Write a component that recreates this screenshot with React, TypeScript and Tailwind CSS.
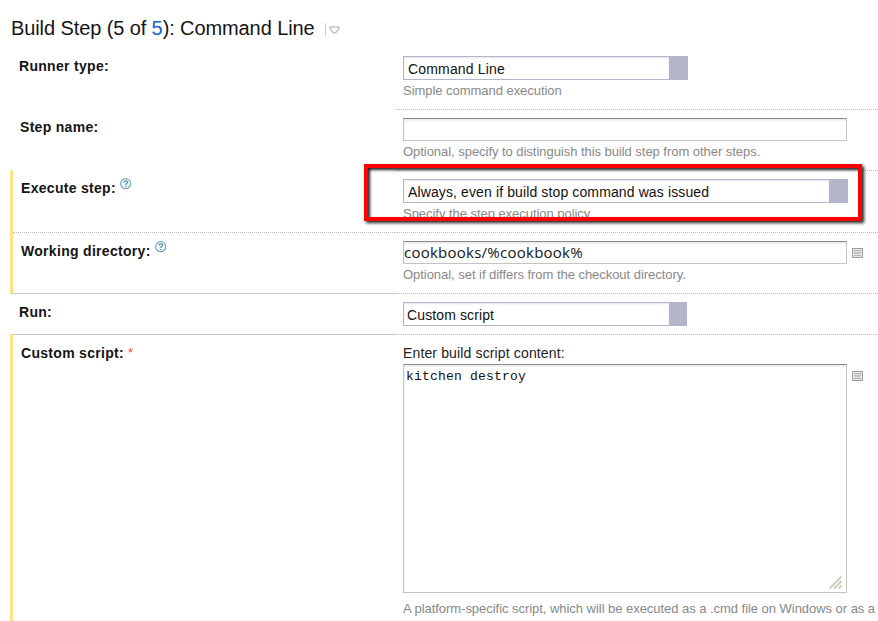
import type { ReactNode } from 'react';

function HelpIcon() {
  return (
    <svg className="ml-[4px] mt-[-2px] h-[12px] w-[12px] shrink-0" viewBox="0 0 12 12" fill="none">
      <circle cx="5.7" cy="5.7" r="5" fill="#f1f8fb" stroke="#7ba6bb" strokeWidth="1.2" />
      <path d="M3.9 4.5C3.9 2.3 7.6 2.3 7.6 4.3C7.6 5.5 5.8 5.5 5.8 7M5.8 7.9V9.1" stroke="#5f93ae" strokeWidth="1.3" />
    </svg>
  );
}

function ListIcon() {
  return (
    <svg className="ml-[5px] mt-[7px] h-[10px] w-[11px] shrink-0" viewBox="0 0 11 10" fill="none" shapeRendering="crispEdges">
      <rect x="0.5" y="0.5" width="10" height="9" fill="#e4e4e7" stroke="#a0a0a0" />
      <path d="M2 2.5H9M2 7.5H9" stroke="#b4b4b8" />
      <path d="M3 4.5H8M3 5.5H8" stroke="#c2c2c6" />
      <path d="M2 4.5H3M8 4.5H9" stroke="#b4b4b8" />
    </svg>
  );
}

function Row({ label, height, cellTop, labelTop = 'pt-[9px]', marked, line, children }: {
  label: ReactNode;
  height: string;
  cellTop: string;
  labelTop?: string;
  marked?: boolean;
  line: string;
  children: ReactNode;
}) {
  return (
    <div className={`flex ${height}`}>
      <div className={`w-[3px] shrink-0 ${marked ? 'mt-[-1px] bg-[#ffe180]' : ''}`} />
      <div className={`flex w-[382px] shrink-0 items-start border-b text-[14px] leading-[16px] font-bold tracking-[0.3px] text-[#151515] ${labelTop} ${line}`}>
        {label}
      </div>
      <div className={`min-w-0 flex-1 border-b border-dotted border-[#bbb] pl-[8px] ${cellTop}`}>{children}</div>
    </div>
  );
}

function Select({ text, width, pad, arrow = 'w-[18px]' }: { text: string; width: string; pad: string; arrow?: string }) {
  return (
    <div className={`flex h-[24px] border border-[#b3b5ca] bg-white ${width}`}>
      <div className={`flex-1 pt-[4px] text-[14px] leading-[16px] text-[#111] shadow-[inset_0_1px_2px_#e4e4e8] ${pad}`}>{text}</div>
      <div className={`bg-[#b3b5ca] ${arrow}`} />
    </div>
  );
}

function Hint({ children }: { children: ReactNode }) {
  return <div className="mt-[3px] text-[13px] leading-[16px] tracking-[-0.04px] whitespace-nowrap text-[#888]">{children}</div>;
}

const field = 'w-[444px] border border-[#c4c4c4] border-t-[#888] bg-white shadow-[inset_1px_2px_2px_#eee]';

export default function App() {
  return (
    <div
      className="h-[621px] w-[878px] overflow-hidden bg-white pl-[10px] text-[#151515]"
      style={{ fontFamily: '"Liberation Sans", Arial, sans-serif' }}
    >
      <div className="flex h-[49px] items-start pt-[17px] pl-[1px]">
        <h1 className="w-[304px] text-[20px] leading-[23px] tracking-[-0.1px] whitespace-pre">
          Build Step (5 of <span className="text-[#1564c8]">5</span>): Command Line
        </h1>
        <div className="mt-[6px] ml-[10px] h-[13px] w-px bg-[#ccc]" />
        <svg className="mt-[9px] ml-[3px] h-[8px] w-[11px]" viewBox="0 0 11 8" fill="none">
          <path d="M1 1.1H10V2.6L6.6 6.7H4.4L1 2.6Z" stroke="#c4c4c4" strokeWidth="1.5" strokeLinejoin="round" />
        </svg>
      </div>

      <Row height="h-[61px]" cellTop="pt-[7px]" line="border-transparent pl-[6px]" label="Runner type:">
        <Select text="Command Line" width="w-[285px]" pad="pl-[4px] tracking-[0.17px]" />
        <Hint>Simple command execution</Hint>
      </Row>

      <Row height="h-[61px]" cellTop="pt-[8px]" line="border-transparent pl-[7px]" label="Step name:">
        <div className={`h-[23px] ${field}`} />
        <Hint>Optional, specify to distinguish this build step from other steps.</Hint>
      </Row>

      <div className="relative">
        <Row
          marked
          height="h-[62px]"
          cellTop="pt-[8px]"
          line="border-dotted border-[#bbb] pl-[8px]"
          label={<>Execute step:<HelpIcon /></>}
        >
          <Select text="Always, even if build stop command was issued" width="w-[445px]" pad="pl-[4px] tracking-[0.12px]" />
          <Hint>Specify the step execution policy</Hint>
        </Row>
        {/* The strip under the highlight frame hides the descenders of the hint */}
        <div className="absolute top-[50px] left-[385px] h-[7px] w-[300px] bg-white" />
        <div className="absolute top-[-7px] left-[354px] h-[57px] w-[498px] border-4 border-[#f00] shadow-[2px_2px_3px_#222,inset_2px_2px_3px_#222]" />
      </div>

      <Row
        marked
        height="h-[61px]"
        cellTop="pt-[8px]"
        labelTop="pt-[10px]"
        line="border-[#c8c8c8] pl-[8px]"
        label={<>Working directory:<HelpIcon /></>}
      >
        <div className="flex">
          <div className={`h-[23px] shrink-0 text-[15px] leading-[21px] tracking-[0.25px] ${field}`} style={{ fontFamily: '"Open Sans", sans-serif' }}>
            cookbooks/%cookbook%
          </div>
          <ListIcon />
        </div>
        <Hint>Optional, set if differs from the checkout directory.</Hint>
      </Row>

      <Row height="h-[41px]" cellTop="pt-[8px]" labelTop="pt-[10px]" line="border-[#c8c8c8] pl-[6px]" label="Run:">
        <Select text="Custom script" width="w-[284px]" pad="pl-[3px] tracking-[0.12px]" arrow="w-[17px]" />
      </Row>

      <Row
        marked
        height="h-[300px]"
        cellTop="pt-[10px]"
        labelTop="pt-[10px]"
        line="border-transparent pl-[8px]"
        label={<>Custom script:<span className="ml-[4px] text-[13px] font-normal text-[#f44]">*</span></>}
      >
        <div className="h-[19px] text-[14px] leading-[16px] tracking-[0.14px] text-[#222]">Enter build script content:</div>
        <div className="flex">
          <div
            className={`flex h-[229px] shrink-0 flex-col justify-between pt-[4px] pl-[2px] text-[13px] leading-[16px] tracking-[0.2px] text-[#111] ${field}`}
            style={{ fontFamily: '"Liberation Mono", "Courier New", monospace' }}
          >
            kitchen destroy
            <svg className="mr-[4px] mb-[3px] h-[13px] w-[13px] self-end" viewBox="0 0 13 13" stroke="#cccdbd" strokeWidth="2">
              <path d="M0.5 12.5L12.5 0.5M5 12.5L12.5 5M9.5 12.5L12.5 9.5" />
            </svg>
          </div>
          <ListIcon />
        </div>
        <div className="mt-[8px] text-[13px] leading-[16px] tracking-[-0.04px] whitespace-nowrap text-[#888]">
          A platform-specific script, which will be executed as a .cmd file on Windows or as a
        </div>
      </Row>
    </div>
  );
}
